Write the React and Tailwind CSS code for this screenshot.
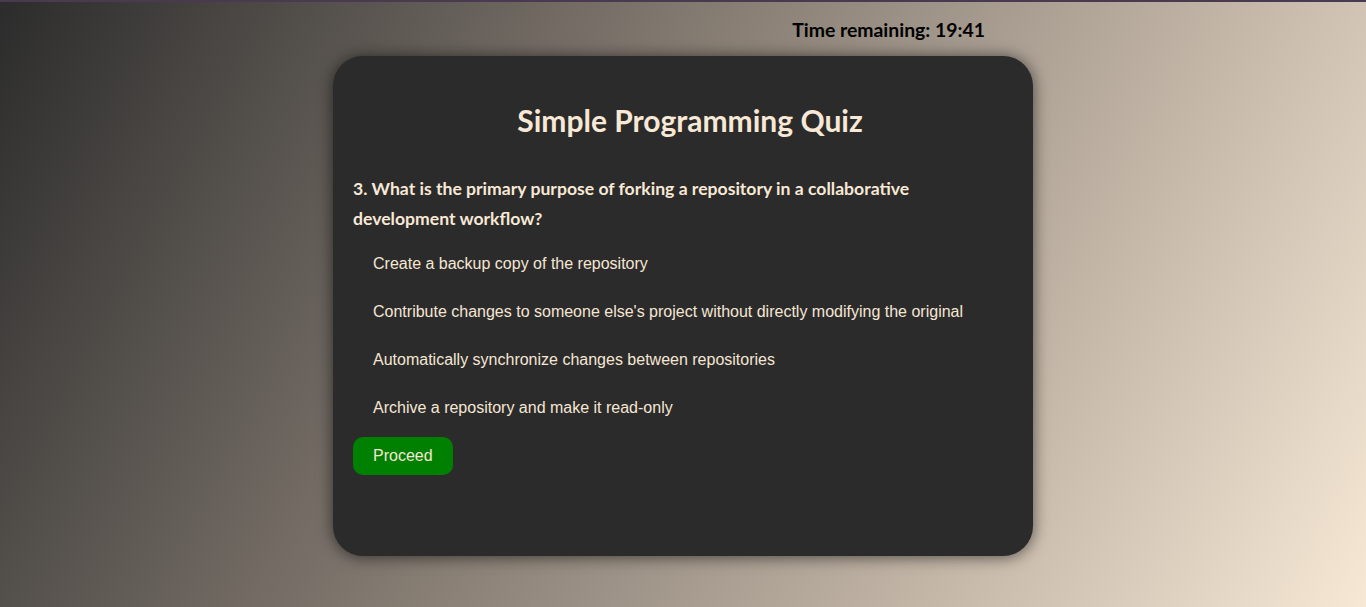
const options = [
	"Create a backup copy of the repository",
	"Contribute changes to someone else's project without directly modifying the original",
	"Automatically synchronize changes between repositories",
	"Archive a repository and make it read-only",
];

function App() {
	return (
		<div className="min-h-[607px] border-t-2 border-[#4a3a50] bg-[linear-gradient(118deg,#2c2c2c_0%,#8a8076_45%,#f7e8d5_100%)] font-['Liberation_Sans',Arial,sans-serif]">
			<div className="flex justify-center pt-[16px]">
				<div className="w-[700px] pr-[48px] text-right font-['Lato',sans-serif] text-[19.4px] leading-[24px] font-bold text-black">
					Time remaining: 19:41
				</div>
			</div>
			<div className="flex justify-center pt-[14px]">
				<div className="h-[500px] w-[700px] rounded-[30px] bg-[#2b2b2b] p-5 shadow-[0_1px_16px_rgba(0,0,0,0.6)]">
					<h1 className="mt-[26px] pl-[14px] text-center font-['Lato',sans-serif] text-[30px] leading-[36px] font-bold text-[#f8e8d6]">
						Simple Programming Quiz
					</h1>
					<p className="mt-[36px] pr-[40px] font-['Lato',sans-serif] text-[17.6px] leading-[30px] font-bold text-[#f8e8d6]">
						3. What is the primary purpose of forking a repository in a collaborative development workflow?
					</p>
					<ul className="mt-[11px] flex flex-col gap-[10px]">
						{options.map((o) => (
							<li
								key={o}
								className="px-5 py-[10px] text-[16px] leading-[18px] text-[#f5e6d3]"
							>
								{o}
							</li>
						))}
					</ul>
					<button className="mt-[10px] rounded-[10px] bg-[#008000] px-5 py-[10px] text-[16px] leading-[18px] text-[#f5e6d3]">
						Proceed
					</button>
				</div>
			</div>
		</div>
	);
}

export default App;
